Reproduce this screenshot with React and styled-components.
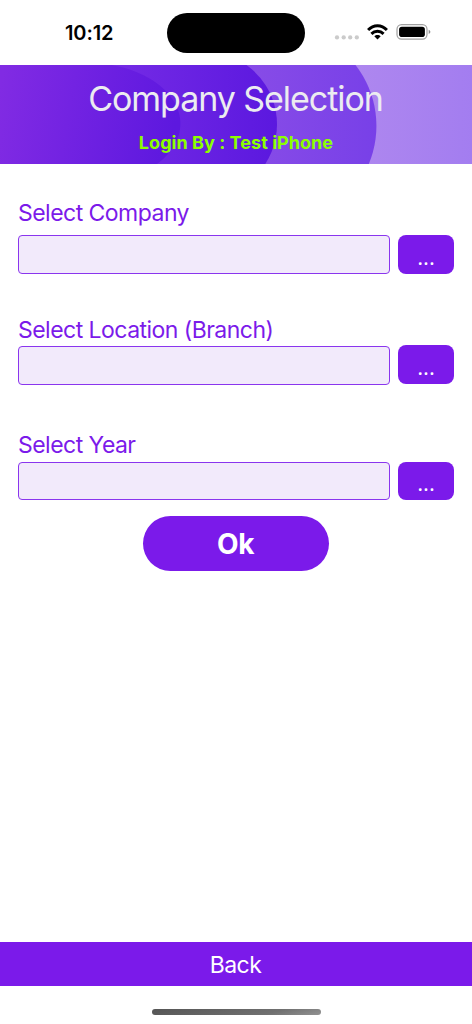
import React, { useState } from 'react'
import styled, { createGlobalStyle } from 'styled-components';

const fields = [
  { name: 'company', label: 'Select Company', labelHeight: 40.9, gap: 36.9, shift: 0 },
  { name: 'location', label: 'Select Location (Branch)', labelHeight: 35.5, gap: 41.4, shift: -1 },
  { name: 'year', label: 'Select Year', labelHeight: 35.5, gap: 0, shift: 0 },
]

const GlobalStyle = createGlobalStyle`
  * {
    box-sizing: border-box;
  }

  body {
    margin: 0;
    background: #ffffff;
    font-family: Inter, 'Liberation Sans', sans-serif;
  }
`

const Screen = styled.div`
  display: flex;
  flex-direction: column;
  width: 100%;
  height: 1024px;
  overflow: hidden;
  background: #ffffff;
`

const StatusBar = styled.div`
  display: grid;
  grid-template-columns: 167px 138px 1fr;
  flex: none;
  height: 65px;
  padding-top: 13px;
`

const Time = styled.div`
  padding-left: 65px;
  color: #000000;
  font-size: 20px;
  font-weight: 600;
  line-height: 40px;
  letter-spacing: -0.1px;
`

const Island = styled.div`
  height: 40px;
  border-radius: 20px;
  background: #000000;
`

const StatusSvg = styled.svg`
  width: 100px;
  height: 20px;
  margin: 9px 0 0 28px;
`

const Header = styled.header`
  position: relative;
  flex: none;
  height: 98.7px;
  text-align: center;
`

const HeaderSvg = styled.svg`
  position: absolute;
  inset: 0;
  width: 100%;
  height: 100%;
`

const Title = styled.h1`
  position: relative;
  margin: 0;
  padding-top: 11px;
  color: #ececf0;
  font-size: 34px;
  font-weight: 400;
  line-height: 46px;
  letter-spacing: -1.05px;
  text-indent: -1px;
`

const Login = styled.div`
  position: relative;
  margin-top: 9px;
  color: #8cff00;
  font-size: 18px;
  font-weight: 700;
  line-height: 24px;
  letter-spacing: 0.05px;
`

const Form = styled.main`
  display: flex;
  flex-direction: column;
  flex: 1;
  padding: 30.7px 18px 0;
`

const Field = styled.div`
  margin-bottom: ${({ $gap }) => $gap}px;
`

const Label = styled.label`
  display: block;
  height: ${({ $height }) => $height}px;
  color: #7b1aea;
  font-size: 23px;
  line-height: 39.4px;
  letter-spacing: -0.53px;
  white-space: nowrap;
`

const Row = styled.div`
  display: grid;
  grid-template-columns: 371.5px 56px;
  column-gap: 8.5px;
  height: 38.5px;
`

const Input = styled.input`
  width: 100%;
  height: 38.5px;
  padding: 0 10px;
  border: 1px solid #8a35ee;
  border-radius: 4px;
  outline: none;
  background: #f2eafb;
  color: #7b1aea;
  font: inherit;
`

const MoreButton = styled.button`
  height: 38.5px;
  margin-top: ${({ $shift }) => $shift}px;
  padding: 5px 0 0;
  border: 0;
  border-radius: 8px;
  background: #7b1aea;
  color: #ffffff;
  font-family: 'Open Sans', sans-serif;
  font-size: 22.5px;
  line-height: 30px;
`

const OkButton = styled.button`
  align-self: center;
  width: 186px;
  height: 55px;
  margin-top: 16px;
  padding: 1px 1px 0 0;
  border: 0;
  border-radius: 28px;
  background: #7b1aea;
  color: #ffffff;
  font-family: inherit;
  font-size: 28px;
  font-weight: 700;
  line-height: 54px;
  letter-spacing: -0.4px;
`

const BackButton = styled.button`
  flex: none;
  height: 44px;
  padding: 2px 1px 0 0;
  border: 0;
  background: #7b1aea;
  color: #ffffff;
  font-family: inherit;
  font-size: 23px;
  font-weight: 400;
  line-height: 42px;
  letter-spacing: -0.6px;
`

const HomeArea = styled.div`
  display: flex;
  justify-content: center;
  flex: none;
  height: 37.6px;
  padding-top: 22.8px;
`

const HomeIndicator = styled.div`
  width: 169px;
  height: 5.5px;
  border-radius: 3px;
  background: linear-gradient(165deg, #555555 0%, #707070 70%, #929292 100%);
`

const StatusIcons = () => (
  <StatusSvg viewBox="333 22 100 20" aria-hidden="true">
    <g fill="#cbcbcb">
      <circle cx="337" cy="37.4" r="2.15" />
      <circle cx="343.7" cy="37.4" r="2.15" />
      <circle cx="350.2" cy="37.4" r="2.15" />
      <circle cx="356.8" cy="37.4" r="2.15" />
    </g>
    <g fill="none" stroke="#000000" strokeWidth="2.9">
      <path d="M368.1 30.1C373.4 24.3 381.6 24.3 386.9 30.1" />
      <path d="M371.4 33.9C374.9 30.4 380.1 30.4 383.6 33.9" />
    </g>
    <path d="M377.5 39.5L374.3 36.3C376 34.4 379 34.4 380.7 36.3Z" fill="#000000" />
    <rect x="397" y="24.6" width="30" height="14.6" rx="4.6" fill="#ffffff" stroke="#a0a0a0" strokeWidth="1.2" />
    <rect x="399.1" y="26.7" width="25.8" height="10.4" rx="2.8" fill="#000000" />
    <path d="M428.7 29.8C430.9 30.6 430.9 33.2 428.7 34Z" fill="#8f8f8f" />
  </StatusSvg>
)

const HeaderArt = () => (
  <HeaderSvg viewBox="0 65 472 98.7" preserveAspectRatio="none" aria-hidden="true">
    <defs>
      <linearGradient id="outer" gradientUnits="userSpaceOnUse" x1="356" y1="0" x2="472" y2="0">
        <stop offset="0" stopColor="#ae87ef" />
        <stop offset="1" stopColor="#a37df0" />
      </linearGradient>
      <linearGradient id="large" gradientUnits="userSpaceOnUse" x1="246" y1="0" x2="376" y2="0">
        <stop offset="0" stopColor="#884ce7" />
        <stop offset="1" stopColor="#7840e8" />
      </linearGradient>
      <linearGradient id="medium" gradientUnits="userSpaceOnUse" x1="112" y1="0" x2="277" y2="0">
        <stop offset="0" stopColor="#752be5" />
        <stop offset="1" stopColor="#5b18df" />
      </linearGradient>
      <linearGradient id="small" gradientUnits="userSpaceOnUse" x1="0" y1="90" x2="176" y2="120">
        <stop offset="0" stopColor="#812be3" />
        <stop offset="0.4" stopColor="#7323e2" />
        <stop offset="1" stopColor="#5d18df" />
      </linearGradient>
    </defs>
    <rect y="65" width="472" height="99" fill="url(#outer)" />
    <path d="M0 65H355.5A99 99 0 0 1 368.8 164H0Z" fill="url(#large)" />
    <path d="M0 65H246.5A73 73 0 0 1 265.3 164H0Z" fill="url(#medium)" />
    <path d="M0 65H112A94 61 0 0 1 157 164H0Z" fill="url(#small)" />
  </HeaderSvg>
)

const SelectField = ({ field, value, onChange }) => (
  <Field $gap={field.gap}>
    <Label htmlFor={field.name} $height={field.labelHeight}>{field.label}</Label>
    <Row>
      <Input id={field.name} value={value} onChange={(event) => onChange(field.name, event.target.value)} />
      <MoreButton type="button" $shift={field.shift}>...</MoreButton>
    </Row>
  </Field>
)

function App() {
  const [values, setValues] = useState({ company: '', location: '', year: '' });

  function handleChange(name, value) {
    setValues(prevState => ({ ...prevState, [name]: value }));
  }

  return (
    <>
      <GlobalStyle />
      <Screen>
        <StatusBar>
          <Time>10:12</Time>
          <Island />
          <StatusIcons />
        </StatusBar>
        <Header>
          <HeaderArt />
          <Title>Company Selection</Title>
          <Login>Login By : Test iPhone</Login>
        </Header>
        <Form>
          {fields.map((field) => (
            <SelectField key={field.name} field={field} value={values[field.name]} onChange={handleChange} />
          ))}
          <OkButton type="button">Ok</OkButton>
        </Form>
        <BackButton type="button">Back</BackButton>
        <HomeArea>
          <HomeIndicator />
        </HomeArea>
      </Screen>
    </>
  );
}

export default App;
